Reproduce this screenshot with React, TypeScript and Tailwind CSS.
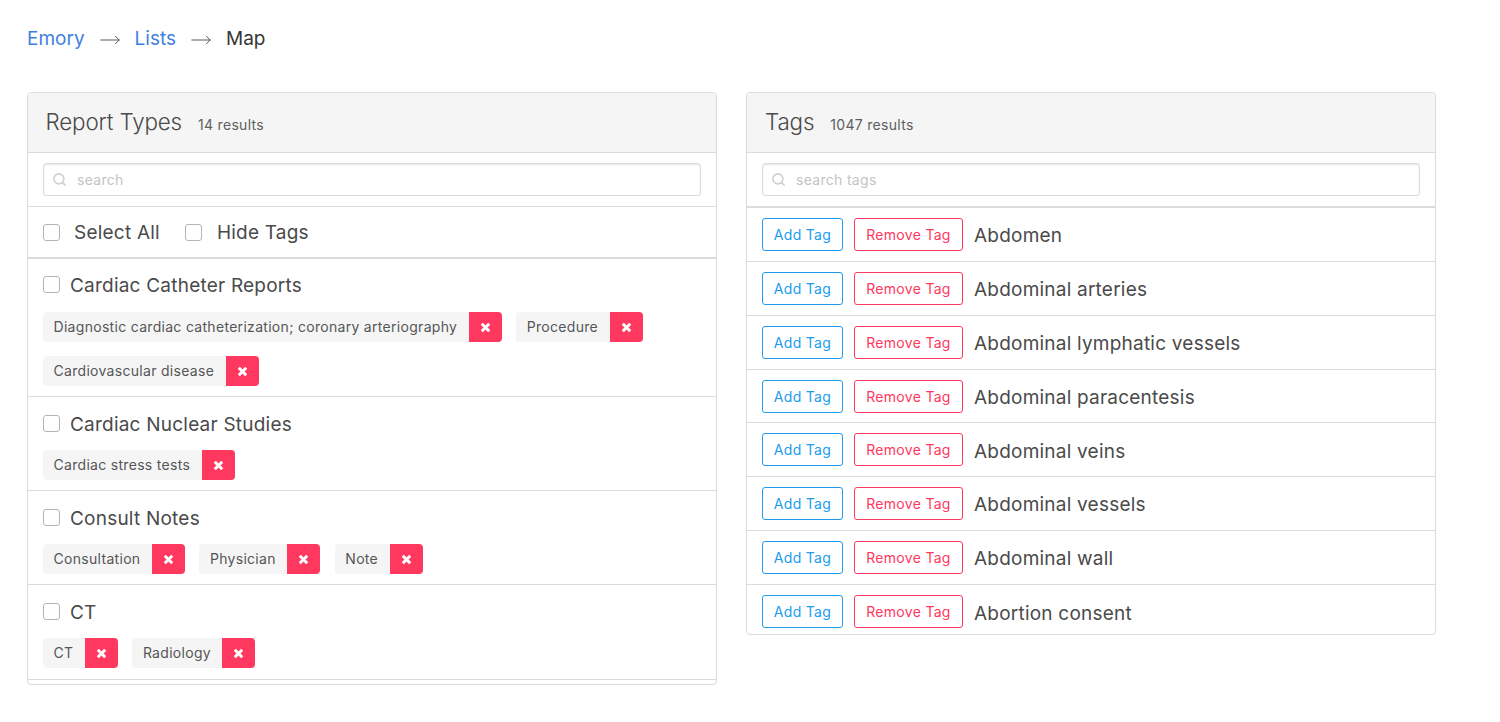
import React from "react";
import { Search, MoveRight } from "lucide-react";

interface ReportType {
  name: string;
  tags: string[];
  pad: string;
  tagsGap: string;
}

const reports: ReportType[] = [
  {
    name: "Cardiac Catheter Reports",
    tags: ["Diagnostic cardiac catheterization; coronary arteriography", "Procedure", "Cardiovascular disease"],
    pad: "h-[138px] pt-[12px]",
    tagsGap: "mt-[11px]",
  },
  { name: "Cardiac Nuclear Studies", tags: ["Cardiac stress tests"], pad: "h-[94px] pt-[13px]", tagsGap: "mt-[10px]" },
  { name: "Consult Notes", tags: ["Consultation", "Physician", "Note"], pad: "h-[94px] pt-[13px]", tagsGap: "mt-[10px]" },
  { name: "CT", tags: ["CT", "Radiology"], pad: "h-[95px] pt-[13px]", tagsGap: "mt-[10px]" },
];

const tagNames = [
  "Abdomen",
  "Abdominal arteries",
  "Abdominal lymphatic vessels",
  "Abdominal paracentesis",
  "Abdominal veins",
  "Abdominal vessels",
  "Abdominal wall",
  "Abortion consent",
];

const Checkbox = () => <span className="block w-[17px] h-[17px] shrink-0 rounded-[3px] border border-[#b5b5b5] bg-white" />;

const TagChip = ({ label }: { label: string }) => (
  <div className="flex h-[30px] text-[14px] tracking-[0.3px]">
    <span className="flex items-center bg-[#f5f5f5] pl-[10.5px] pr-[11.5px] pb-[2px] rounded-l-[4px] text-[#555555]">{label}</span>
    <span className="flex items-center justify-center w-[33px] bg-[#ff3860] rounded-r-[4px]">
      <svg width="11" height="11" viewBox="0 0 11 11">
        <path d="M1.8 1.8 L9.2 9.2 M9.2 1.8 L1.8 9.2" stroke="#fff" strokeWidth="3" />
      </svg>
    </span>
  </div>
);

const PanelHeader = ({ title, count, inset }: { title: string; count: string; inset: string }) => (
  <div className={`flex items-baseline gap-[16px] h-[60px] bg-[#f5f5f5] border-b border-[#dbdbdb] rounded-t-[4px] pt-[12px] ${inset}`}>
    <span className="text-[22.4px] text-[#4a4a4a] font-light tracking-[-0.15px]">{title}</span>
    <span className="text-[14px] text-[#5e5e5e] tracking-[0.3px]">{count}</span>
  </div>
);

const SearchBox = ({ placeholder }: { placeholder: string }) => (
  <div className="flex items-center h-[33px] rounded-[3px] border border-[#dbdbdb] shadow-[inset_0_1px_2px_rgba(10,10,10,0.1)] bg-white">
    <Search size={15} strokeWidth={2.5} className="ml-[8px] text-[#d0d0d0]" />
    <span className="ml-[10px] text-[14px] text-[#c4c4c4] tracking-[0.3px]">{placeholder}</span>
  </div>
);

export default function App() {
  return (
    <div className="w-[1500px] h-[722px] bg-white overflow-hidden font-['Inter','Liberation_Sans',sans-serif] text-[#4a4a4a]">
      <nav className="flex items-center h-[77px] pt-[2px] pl-[27px] text-[19px]">
        <span className="text-[#3f7fe0]">Emory</span>
        <MoveRight size={22} strokeWidth={1} className="mx-[14px] text-[#4a4a4a]" />
        <span className="text-[#3f7fe0]">Lists</span>
        <MoveRight size={22} strokeWidth={1} className="mx-[14px] text-[#4a4a4a]" />
        <span className="text-[#363636]">Map</span>
      </nav>

      <div className="flex items-start gap-[29px] pl-[27px] pt-[15px]">
        <section className="w-[690px] h-[593px] border border-[#dbdbdb] rounded-[4px]">
          <PanelHeader title="Report Types" count="14 results" inset="pl-[17.5px]" />
          <div className="h-[54px] border-b border-[#dbdbdb] pt-[10px] px-[15px]">
            <SearchBox placeholder="search" />
          </div>
          <div className="flex items-center h-[52px] border-b-2 border-[#dbdbdb] pl-[15px] text-[19px] tracking-[0.22px]">
            <Checkbox />
            <span className="ml-[14px] pt-[2px]">Select All</span>
            <span className="ml-[25px]"><Checkbox /></span>
            <span className="ml-[15px] pt-[2px]">Hide Tags</span>
          </div>
          {reports.map((report) => (
            <div key={report.name} className={`${report.pad} border-b border-[#dbdbdb] px-[15px]`}>
              <div className="flex items-center gap-[10px] h-[30px] text-[19px] tracking-[0.22px]">
                <span className="-translate-y-[2px]"><Checkbox /></span>
                <span>{report.name}</span>
              </div>
              <div className={`flex flex-wrap gap-x-[14.5px] gap-y-[14px] ${report.tagsGap}`}>
                {report.tags.map((tag) => (
                  <TagChip key={tag} label={tag} />
                ))}
              </div>
            </div>
          ))}
        </section>

        <section className="w-[690px] h-[543px] border border-[#dbdbdb] rounded-[4px]">
          <PanelHeader title="Tags" count="1047 results" inset="pl-[18px]" />
          <div className="h-[55px] border-b-2 border-[#dbdbdb] pt-[10px] px-[15px]">
            <SearchBox placeholder="search tags" />
          </div>
          {tagNames.map((name, i) => (
            <div key={name} className={`flex items-center h-[53.86px] pl-[15px] ${i < tagNames.length - 1 ? "border-b border-[#dbdbdb]" : ""}`}>
              <button className="w-[81px] h-[33px] rounded-[3px] border border-[#209cee] text-[#209cee] text-[14px] tracking-[0.3px] bg-white">Add Tag</button>
              <button className="ml-[11px] w-[109px] h-[33px] rounded-[3px] border border-[#ff3860] text-[#ff3860] text-[14px] tracking-[0.3px] bg-white">Remove Tag</button>
              <span className="ml-[11px] mt-[4px] text-[19px] tracking-[0.22px]">{name}</span>
            </div>
          ))}
        </section>
      </div>
    </div>
  );
}
